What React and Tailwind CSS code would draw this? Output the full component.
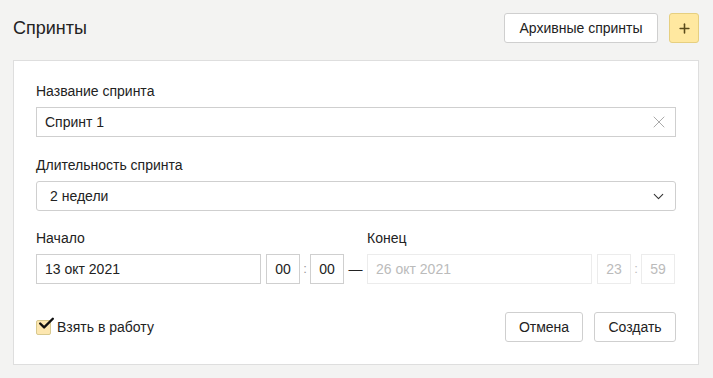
import { X, ChevronDown, Plus, Check } from 'lucide-react';

// --- Small building blocks ---
const Label = ({ children }) => (
    <div className="text-[14px] text-[#222] leading-4 mb-[8px]">{children}</div>
);

const TimeBox = ({ value, disabled }) => (
    <div
        className={`w-[34px] h-[30px] flex items-center justify-center border text-[14px] ${
            disabled ? 'border-[#ececec] text-[#bbb]' : 'border-[#cfcfcf] text-[#222]'
        }`}
    >
        {value}
    </div>
);

const TimeColon = ({ disabled }) => (
    <span className={`w-[10px] text-center text-[13px] ${disabled ? 'text-[#bbb]' : 'text-[#999]'}`}>:</span>
);

const Button = ({ children, className = '' }) => (
    <button className={`h-[30px] border border-[#cfcfcf] rounded-[3px] bg-white text-[14px] text-[#222] ${className}`}>
        {children}
    </button>
);

// --- Main page ---
export default function App() {
    return (
        <div className="w-[713px] h-[378px] bg-[#f3f3f2] font-['Liberation_Sans',Arial,sans-serif] px-[13px] pt-[13px]">
            {/* Header */}
            <div className="flex items-center h-[30px] w-[686px]">
                <h1 className="text-[18px] text-[#222] flex-1">Спринты</h1>
                <Button className="w-[154px] h-[30px]">Архивные спринты</Button>
                <button className="ml-[11px] w-[30px] h-[30px] rounded-[3px] border border-[#e6cf80] bg-[#ffe8a0] flex items-center justify-center text-[#5a4a1a]">
                    <Plus size={15} strokeWidth={2.5} />
                </button>
            </div>

            {/* Form card */}
            <div className="mt-[17px] w-[686px] h-[305px] bg-white border border-[#dedede] px-[22px] pt-[22px]">
                <Label>Название спринта</Label>
                <div className="h-[30px] border border-[#cfcfcf] flex items-center pl-[8px] pr-[6px] text-[14px] text-[#222]">
                    <span className="flex-1">Спринт 1</span>
                    <X size={20} strokeWidth={1} className="text-[#999]" />
                </div>

                <div className="mt-[20px]">
                    <Label>Длительность спринта</Label>
                    <div className="h-[30px] border border-[#cfcfcf] rounded-[3px] flex items-center pl-[13px] pr-[8px] text-[14px] text-[#222]">
                        <span className="flex-1">2 недели</span>
                        <ChevronDown size={17} strokeWidth={1.5} className="text-[#333]" />
                    </div>
                </div>

                {/* Dates */}
                <div className="mt-[19px] flex items-end">
                    <div>
                        <Label>Начало</Label>
                        <div className="flex items-center">
                            <div className="w-[225px] h-[30px] border border-[#cfcfcf] flex items-center pl-[8px] text-[14px] text-[#222]">
                                13 окт 2021
                            </div>
                            <div className="ml-[5px] flex items-center">
                                <TimeBox value="00" />
                                <TimeColon />
                                <TimeBox value="00" />
                            </div>
                        </div>
                    </div>
                    <div className="w-[23px] h-[30px] flex items-center justify-center text-[#222] text-[14px]">—</div>
                    <div>
                        <Label>Конец</Label>
                        <div className="flex items-center">
                            <div className="w-[225px] h-[30px] border border-[#ececec] flex items-center pl-[8px] text-[14px] text-[#bbb]">
                                26 окт 2021
                            </div>
                            <div className="ml-[5px] flex items-center">
                                <TimeBox value="23" disabled />
                                <TimeColon disabled />
                                <TimeBox value="59" disabled />
                            </div>
                        </div>
                    </div>
                </div>

                {/* Footer */}
                <div className="mt-[28px] flex items-center">
                    <label className="flex items-center flex-1 text-[14px] text-[#222]">
                        <span className="relative w-[15px] h-[15px] border border-[#d8c98f] bg-[#fde7b0] rounded-[2px] mr-[6px]">
                            <Check size={19} strokeWidth={3} className="absolute -top-[7px] left-[0px] text-[#111]" />
                        </span>
                        Взять в работу
                    </label>
                    <Button className="w-[78px]">Отмена</Button>
                    <Button className="w-[82px] ml-[11px]">Создать</Button>
                </div>
            </div>
        </div>
    );
}
